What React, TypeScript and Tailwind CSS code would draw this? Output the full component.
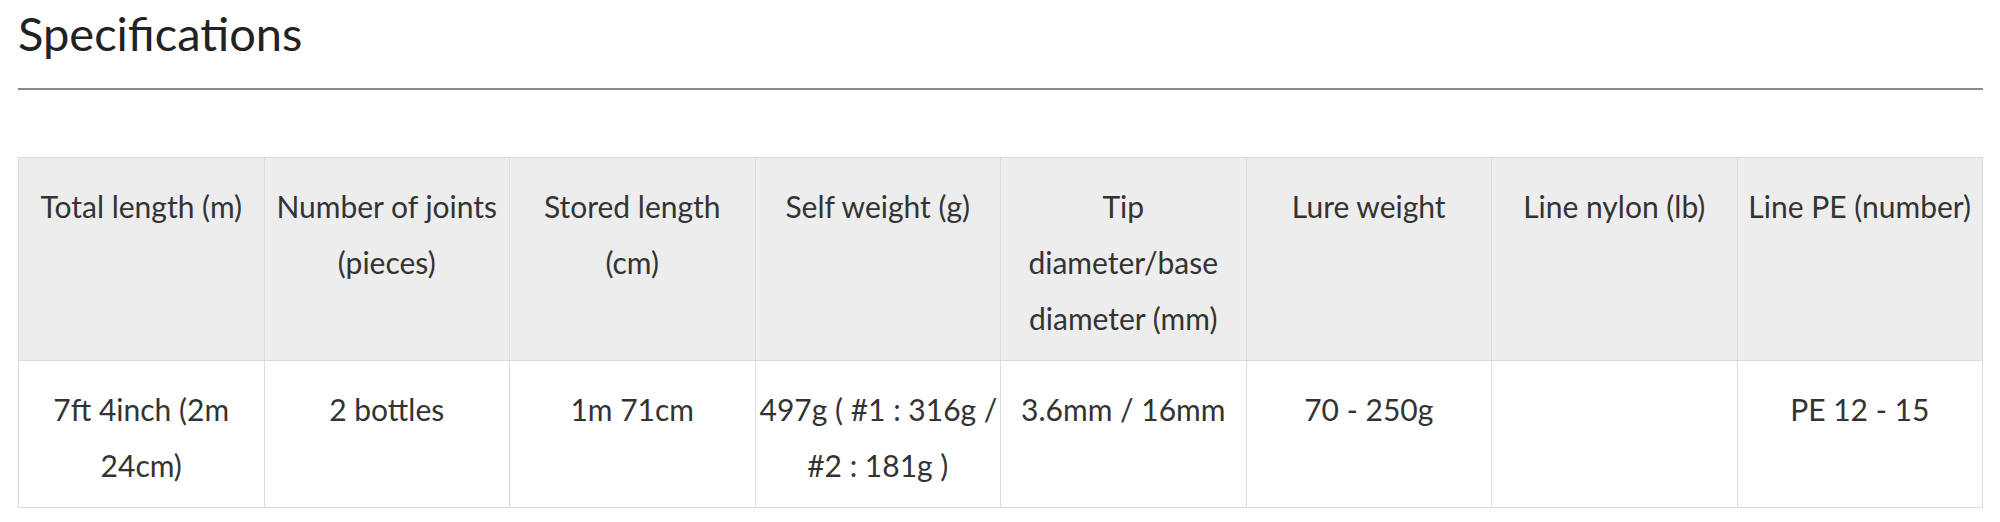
import React from "react";

const headers: string[][] = [
  ["Total length (m)"],
  ["Number of joints", "(pieces)"],
  ["Stored length", "(cm)"],
  ["Self weight (g)"],
  ["Tip", "diameter/base", "diameter (mm)"],
  ["Lure weight"],
  ["Line nylon (lb)"],
  ["Line PE (number)"],
];

const values: string[][] = [
  ["7ft 4inch (2m", "24cm)"],
  ["2 bottles"],
  ["1m 71cm"],
  ["497g ( #1 : 316g /", "#2 : 181g )"],
  ["3.6mm / 16mm"],
  ["70 - 250g"],
  [],
  ["PE 12 - 15"],
];

function Lines({ lines }: { lines: string[] }) {
  return (
    <>
      {lines.map((l, i) => (
        <div key={i} className="whitespace-nowrap">
          {l}
        </div>
      ))}
    </>
  );
}

export default function App() {
  return (
    <div
      className="w-[2000px] h-[522px] bg-white pl-[18px] pr-[17px] overflow-hidden"
      style={{ fontFamily: "Lato, 'Open Sans', sans-serif" }}
    >
      <h2 className="pt-[5px] text-[47px] leading-[1.2] text-[#222222] font-normal">
        Specifications
      </h2>
      <div className="mt-[27px] h-[2px] bg-[#8c8c8c]" />
      <table className="mt-[67px] w-full table-fixed border-collapse text-[30px] leading-[56px] text-[#333333]">
        <thead>
          <tr className="bg-[#ededed]">
            {headers.map((h, i) => (
              <th
                key={i}
                className="border border-[#dcdcdc] px-[4px] pt-[20px] pb-[14px] align-top text-center font-normal"
              >
                <Lines lines={h} />
              </th>
            ))}
          </tr>
        </thead>
        <tbody>
          <tr>
            {values.map((v, i) => (
              <td
                key={i}
                className="border border-[#dcdcdc] px-[4px] pt-[20px] pb-[14px] h-[146px] align-top text-center"
              >
                <Lines lines={v} />
              </td>
            ))}
          </tr>
        </tbody>
      </table>
    </div>
  );
}
